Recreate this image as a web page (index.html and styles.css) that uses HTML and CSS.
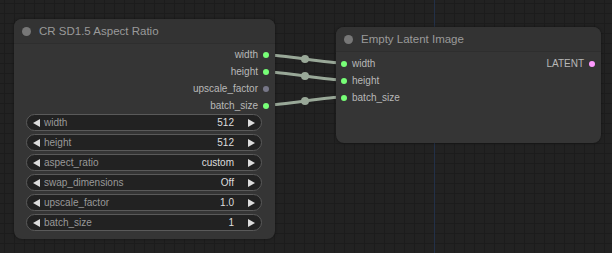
FILE: index.html
```html
<!DOCTYPE html>
<html lang="en">
<head>
  <meta charset="UTF-8">
  <title>Graph</title>
  <link rel="stylesheet" href="styles.css">
</head>
<body>
  <div class="canvas">
    <div class="guide"></div>

    <svg class="links" width="612" height="253" viewBox="0 0 612 253">
      <path d="M266 55 C 286 55, 324 63, 344 63" />
      <path d="M266 72 C 286 72, 324 80, 344 80" />
      <path d="M266 105 C 286 105, 324 97, 344 97" />
      <circle cx="305" cy="59" r="4" />
      <circle cx="305" cy="76" r="4" />
      <circle cx="305" cy="101" r="4" />
    </svg>

    <div class="node node-ratio">
      <div class="node-title"><span class="title-dot"></span>CR SD1.5 Aspect Ratio</div>
      <div class="node-body">
        <div class="slots outputs">
          <div class="slot">width<span class="dot green"></span></div>
          <div class="slot">height<span class="dot green"></span></div>
          <div class="slot">upscale_factor<span class="dot grey"></span></div>
          <div class="slot">batch_size<span class="dot green"></span></div>
        </div>
        <div class="widgets">
          <div class="widget"><span class="arrow left"></span><span class="label">width</span><span class="value">512</span><span class="arrow right"></span></div>
          <div class="widget"><span class="arrow left"></span><span class="label">height</span><span class="value">512</span><span class="arrow right"></span></div>
          <div class="widget"><span class="arrow left"></span><span class="label">aspect_ratio</span><span class="value">custom</span><span class="arrow right"></span></div>
          <div class="widget"><span class="arrow left"></span><span class="label">swap_dimensions</span><span class="value">Off</span><span class="arrow right"></span></div>
          <div class="widget"><span class="arrow left"></span><span class="label">upscale_factor</span><span class="value">1.0</span><span class="arrow right"></span></div>
          <div class="widget"><span class="arrow left"></span><span class="label">batch_size</span><span class="value">1</span><span class="arrow right"></span></div>
        </div>
      </div>
    </div>

    <div class="node node-latent">
      <div class="node-title"><span class="title-dot"></span>Empty Latent Image</div>
      <div class="node-body io">
        <div class="slots inputs">
          <div class="slot"><span class="dot green"></span>width</div>
          <div class="slot"><span class="dot green"></span>height</div>
          <div class="slot"><span class="dot green"></span>batch_size</div>
        </div>
        <div class="slots outputs">
          <div class="slot">LATENT<span class="dot pink"></span></div>
        </div>
      </div>
    </div>
  </div>
</body>
</html>
```

FILE: styles.css
```css
* {
  margin: 0;
  padding: 0;
  box-sizing: border-box;
  font-family: "Liberation Sans", Arial, sans-serif;
}

body {
  background: #222;
}

.canvas {
  position: relative;
  width: 612px;
  height: 253px;
  overflow: hidden;
  background-color: #222;
  background-image:
    linear-gradient(#1c1c1c 1px, transparent 1px),
    linear-gradient(90deg, #1c1c1c 1px, transparent 1px);
  background-size: 10px 10px;
  background-position: 4px 3px;
}

.guide {
  position: absolute;
  left: 434px;
  top: 0;
  width: 1px;
  height: 253px;
  background: #223048;
}

.links {
  position: absolute;
  left: 0;
  top: 0;
}

.links path {
  fill: none;
  stroke: #99a898;
  stroke-width: 3;
}

.links circle {
  fill: #99a898;
}

/* nodes */
.node {
  position: absolute;
  background: #353535;
  border-radius: 8px;
  box-shadow: 0 0 3px rgba(0, 0, 0, 0.5);
}

.node-ratio {
  left: 14px;
  top: 19px;
  width: 261px;
  height: 220px;
}

.node-latent {
  left: 336px;
  top: 27px;
  width: 265px;
  height: 116px;
}

.node-title {
  display: flex;
  align-items: center;
  height: 25px;
  padding-left: 8px;
  background: #333;
  border-bottom: 1px solid #2e2e2e;
  border-radius: 8px 8px 0 0;
  color: #9a9a9a;
  font-size: 11.5px;
}

.title-dot {
  width: 9px;
  height: 9px;
  margin-right: 8px;
  border-radius: 50%;
  background: #777;
}

.node-body {
  padding: 2px 0 0;
}

.slots {
  display: flex;
  flex-direction: column;
}

.slot {
  display: flex;
  align-items: center;
  height: 17px;
  font-size: 10px;
  color: #b8b8b8;
}

.outputs .slot {
  justify-content: flex-end;
}

.outputs .dot {
  margin: 0 6px 0 5px;
}

.inputs .dot {
  margin: 0 5px 0 5px;
}

.dot {
  width: 6px;
  height: 6px;
  border-radius: 50%;
}

.dot.green {
  background: #7f7;
}

.dot.grey {
  background: #778;
}

.dot.pink {
  background: #f9f;
}

.io {
  display: flex;
  justify-content: space-between;
  padding-top: 3px;
}

/* widgets */
.widgets {
  display: flex;
  flex-direction: column;
  gap: 3px;
  margin: 0 13px 0 12px;
}

.widget {
  display: flex;
  align-items: center;
  height: 17px;
  padding: 0 6px;
  background: #222;
  border: 1px solid #5a5a5a;
  border-radius: 9px;
  font-size: 10px;
}

.widget .label {
  flex: 1;
  margin-left: 4px;
  color: #999;
}

.widget .value {
  color: #ddd;
  margin-right: 14px;
}

.arrow {
  width: 0;
  height: 0;
  border-top: 4px solid transparent;
  border-bottom: 4px solid transparent;
}

.arrow.left {
  border-right: 7px solid #ddd;
}

.arrow.right {
  border-left: 7px solid #ddd;
}
```
